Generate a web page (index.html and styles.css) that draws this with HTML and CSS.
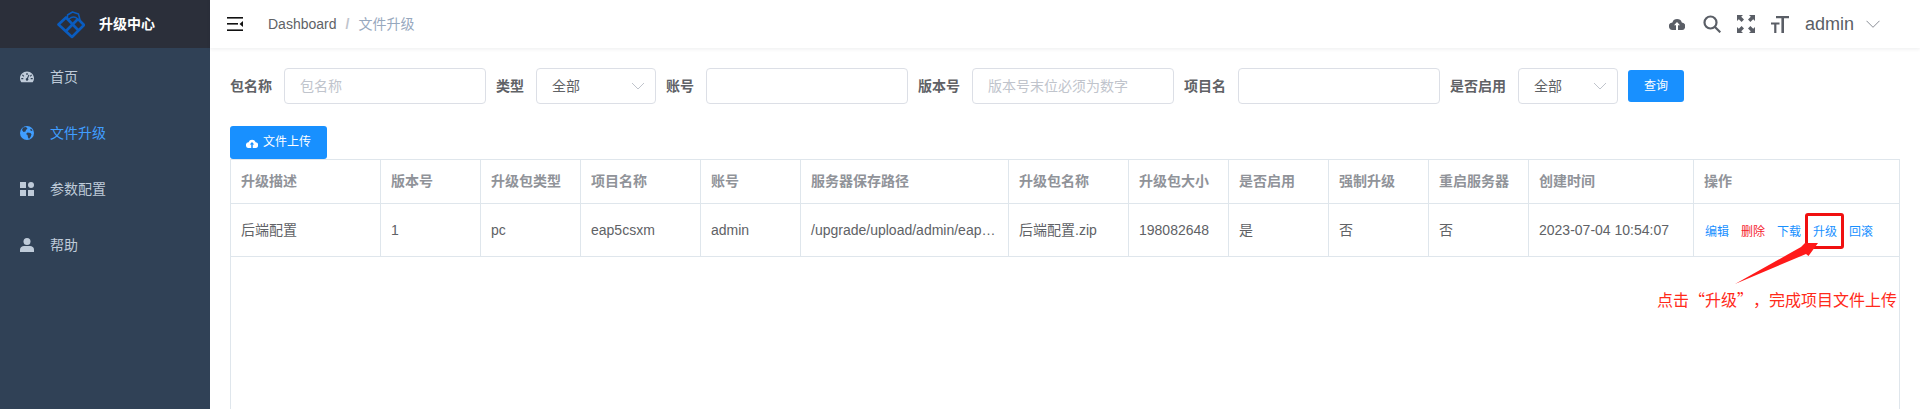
FILE: index.html
```html
<!DOCTYPE html>
<html lang="zh-CN">
<head>
<meta charset="utf-8">
<title>升级中心</title>
<link rel="stylesheet" href="styles.css">
</head>
<body>
<aside class="sidebar">
  <div class="brand">
    <svg class="logo" viewBox="0 0 28 28" fill="none" stroke="#0a5cbf" stroke-linejoin="round"><path stroke-width="2.600" d="M21 8 27 14 15 26 1.500 13.500 9 6.500 21 19"/><path stroke-width="2.600" d="M21 8 9 20"/><path stroke-width="1.500" d="M10.500 9V4L15.500 1 21.500 3 23 9"/><path stroke-width="1.300" d="M12 8Q16.500 4 21 8"/></svg>
    <span class="brand-name">升级中心</span>
  </div>
  <nav class="menu">
    <a class="menu-item">
      <svg class="menu-icon" viewBox="0 0 14 14" fill="currentColor"><path fill-rule="evenodd" d="M7 1.500C3.100 1.500 0 4.500 0 8.300c0 1.500.500 2.900 1.300 4h11.400c.8-1.100 1.300-2.500 1.300-4 0-3.800-3.100-6.800-7-6.800zM6.400 3h1.200v2H6.400zM2.800 4.500l1.400 1.400-.8.800L2 5.300zm8.400 0 .8.800-1.400 1.400-.8-.8zM1.300 8h2v1.200h-2zm9.400 0h2v1.200h-2zM8.500 4.700l.9.400L8 8.400a1.300 1.300 0 1 1-1-.4z"/></svg>
      <span>首页</span>
    </a>
    <a class="menu-item active">
      <svg class="menu-icon" viewBox="0 0 14 14"><circle cx="7" cy="7" r="7" fill="currentColor"/><path fill="#304156" d="M3 1.500 6 1l1.500 1.500L6 4 5.500 5.500 3.500 6 2 4zM7.500 6.500l3 .5 1 1.500-1 2.500-1.500 2-1-1.500-.5-2.500-1.500-1zM11 2.500l1.500 2-1 .5-1.500-1z"/></svg>
      <span>文件升级</span>
    </a>
    <a class="menu-item">
      <svg class="menu-icon" viewBox="0 0 14 14" fill="currentColor"><rect y="0" width="6" height="6"/><circle cx="11" cy="3" r="3"/><rect y="8" width="6" height="6"/><rect x="8" y="8" width="6" height="6"/></svg>
      <span>参数配置</span>
    </a>
    <a class="menu-item">
      <svg class="menu-icon" viewBox="0 0 14 14" fill="currentColor"><circle cx="7" cy="3.500" r="3.500"/><path d="M0 14v-2.500C0 9.500 2 8 4 8h6c2 0 4 1.500 4 3.500V14z"/></svg>
      <span>帮助</span>
    </a>
  </nav>
</aside>
<div class="main">
  <header class="navbar">
    <svg class="hamburger" viewBox="0 0 16 14" fill="#111"><rect width="16" height="1.600"/><rect y="6" width="11" height="1.600"/><rect y="12.400" width="16" height="1.600"/><path d="M16 4v6l-3.500-3z"/></svg>
    <div class="crumbs"><span class="crumb-root">Dashboard</span><span class="crumb-sep">/</span><span class="crumb-current">文件升级</span></div>
    <div class="nav-right">
      <svg class="nav-cloud" viewBox="0 0 16 12"><path fill="#5a5e66" d="M4 12a3.800 3.800 0 0 1-.6-7.600A5 5 0 0 1 12.800 4.400 3.800 3.800 0 0 1 12 12z"/><path fill="#fff" d="M8 4 5 7.300h2V12h2V7.300h2z"/></svg>
      <svg class="nav-icon" viewBox="0 0 18 18" fill="none" stroke="#5a5e66" stroke-width="2.200"><circle cx="7.500" cy="7.500" r="6"/><path d="m12 12 5.300 5.300"/></svg>
      <svg class="nav-icon" viewBox="0 0 18 18" fill="#5a5e66"><path d="M0 0h6L4.200 1.800 7 4.600 4.600 7 1.800 4.200 0 6zM18 0v6l-1.800-1.800L13.400 7 11 4.600l2.800-2.800L12 0zM0 18v-6l1.800 1.800L4.600 11 7 13.400l-2.800 2.800L6 18zM18 18h-6l1.800-1.800L11 13.400l2.400-2.400 2.800 2.800L18 12z"/></svg>
      <svg class="nav-icon" viewBox="0 0 18 18" fill="#5a5e66"><path d="M5 1h13v2.300h-5V18h-2.600V3.300H5zM0 7.500h8.500v2H5.400V18H3.200V9.500H0z"/></svg>
      <span class="user">admin</span>
      <svg class="nav-chevron" viewBox="0 0 14 8" fill="none" stroke="#8a8e96" stroke-width="1"><path d="m.5 .8 6.500 6.500L13.500 .8"/></svg>
    </div>
  </header>
  <section class="content">
    <form class="filters">
      <div class="field"><label class="field-label">包名称</label><div class="control w202"><span class="placeholder">包名称</span></div></div>
      <div class="field"><label class="field-label">类型</label><div class="control w120"><span>全部</span><svg class="select-arrow" viewBox="0 0 14 8" fill="none" stroke="#c0c4cc"><path d="m1 1 6 6 6-6"/></svg></div></div>
      <div class="field"><label class="field-label">账号</label><div class="control w202"></div></div>
      <div class="field"><label class="field-label">版本号</label><div class="control w202"><span class="placeholder">版本号末位必须为数字</span></div></div>
      <div class="field"><label class="field-label">项目名</label><div class="control w202"></div></div>
      <div class="field"><label class="field-label">是否启用</label><div class="control w100"><span>全部</span><svg class="select-arrow" viewBox="0 0 14 8" fill="none" stroke="#c0c4cc"><path d="m1 1 6 6 6-6"/></svg></div></div>
      <button type="button" class="btn-query">查询</button>
    </form>
    <button type="button" class="btn-upload">
      <svg class="upload-icon" viewBox="0 0 16 12"><path fill="#fff" d="M4 12a3.800 3.800 0 0 1-.6-7.600A5 5 0 0 1 12.800 4.400 3.800 3.800 0 0 1 12 12z"/><path fill="#1890ff" d="M8 4 5 7.300h2V12h2V7.300h2z"/></svg>
      文件上传
    </button>
    <div class="table-wrap">
      <table class="grid">
        <colgroup>
          <col class="c150"><col class="c100"><col class="c100"><col class="c120"><col class="c100"><col class="c208"><col class="c120"><col class="c100"><col class="c100"><col class="c100"><col class="c100"><col class="c165"><col class="c205">
        </colgroup>
        <thead>
          <tr><th>升级描述</th><th>版本号</th><th>升级包类型</th><th>项目名称</th><th>账号</th><th>服务器保存路径</th><th>升级包名称</th><th>升级包大小</th><th>是否启用</th><th>强制升级</th><th>重启服务器</th><th>创建时间</th><th>操作</th></tr>
        </thead>
        <tbody>
          <tr>
            <td>后端配置</td><td>1</td><td>pc</td><td>eap5csxm</td><td>admin</td><td>/upgrade/upload/admin/eap…</td><td>后端配置.zip</td><td>198082648</td><td>是</td><td>否</td><td>否</td><td>2023-07-04 10:54:07</td>
            <td class="ops"><a class="op">编辑</a><a class="op danger">删除</a><a class="op">下载</a><a class="op">升级</a><a class="op">回滚</a></td>
          </tr>
        </tbody>
      </table>
    </div>
  </section>
</div>
<div class="callout-box"></div>
<svg class="callout-arrow" viewBox="0 0 90 48"><path fill="#ff1a1a" d="M2 45 68 8 72 4 85 4 75.500 17 73 15z"/></svg>
<div class="callout-text">点击“升级”，完成项目文件上传</div>
</body>
</html>
```
FILE: styles.css
```css
* { box-sizing: border-box; }
html, body { margin: 0; height: 100%; }
body {
  display: flex;
  height: 409px;
  overflow: hidden;
  position: relative;
  background: #fff;
  color: #606266;
  font: 14px/1.15 "Liberation Sans", "Noto Sans CJK SC", sans-serif;
}

/* sidebar */
.sidebar { width: 210px; flex: none; background: #304156; }
.brand {
  height: 48px;
  background: #2b2f3a;
  display: flex;
  align-items: center;
  padding-left: 57px;
  gap: 14px;
}
.logo { width: 28px; height: 28px; margin-top: 1px; }
.brand-name { color: #fff; font-weight: 700; font-size: 14px; }
.menu { display: flex; flex-direction: column; margin-top: 1px; }
.menu-item {
  height: 56px;
  display: flex;
  align-items: center;
  padding-left: 20px;
  gap: 16px;
  color: #bfcbd9;
}
.menu-item.active { color: #409eff; }
.menu-icon { width: 14px; height: 14px; flex: none; }

/* main */
.main { flex: 1; min-width: 0; display: flex; flex-direction: column; }
.navbar {
  height: 48px;
  flex: none;
  display: flex;
  align-items: center;
  padding: 0 40px 0 17px;
  box-shadow: 0 1px 4px rgba(0, 21, 41, .08);
  position: relative;
}
.hamburger { width: 16px; height: 14px; flex: none; }
.crumbs { margin-left: 25px; display: flex; align-items: center; }
.crumb-sep { color: #c0c4cc; font-weight: 700; margin: 0 9px; }
.crumb-current { color: #97a8be; }
.nav-right { margin-left: auto; display: flex; align-items: center; }
.nav-cloud { width: 16px; height: 12px; margin-right: 18px; }
.nav-icon { width: 18px; height: 18px; margin-right: 16px; }
.user { font-size: 18px; color: #5a5e66; }
.nav-chevron { width: 14px; height: 8px; margin-left: 12px; }

/* content */
.content {
  flex: 1;
  min-height: 0;
  display: flex;
  flex-direction: column;
  align-items: flex-start;
  padding: 20px 20px 0;
}
.filters { display: flex; align-items: center; height: 36px; }
.field { display: flex; align-items: center; margin-right: 10px; }
.field-label { font-weight: 700; padding-right: 12px; color: #606266; }
.control {
  height: 36px;
  border: 1px solid #dcdfe6;
  border-radius: 4px;
  padding: 0 15px;
  display: flex;
  align-items: center;
  justify-content: space-between;
  color: #606266;
}
.w100 { width: 100px; }
.w120 { width: 120px; }
.w202 { width: 202px; }
.placeholder { color: #c0c4cc; }
.select-arrow { width: 14px; height: 8px; margin-right: -5px; }
.btn-query {
  width: 56px;
  height: 32px;
  border: 0;
  border-radius: 3px;
  background: #1890ff;
  color: #fff;
  font: inherit;
  font-size: 12px;
  padding: 1px 0 0;
}
.btn-upload {
  margin-top: 22px;
  width: 97px;
  height: 33px;
  border: 0;
  border-radius: 3px;
  background: #1890ff;
  color: #fff;
  font: inherit;
  font-size: 12px;
  padding: 1px 0 0;
  display: flex;
  align-items: center;
  justify-content: center;
  gap: 5px;
  flex: none;
}
.upload-icon { width: 12px; height: 9px; }

/* table */
.table-wrap {
  width: 1670px;
  flex: 1;
  min-height: 0;
  border: 1px solid #dfe6ec;
  border-bottom: 0;
}
.grid { border-collapse: separate; border-spacing: 0; table-layout: fixed; width: 1668px; }
.c100 { width: 100px; }
.c120 { width: 120px; }
.c150 { width: 150px; }
.c165 { width: 165px; }
.c205 { width: 205px; }
.c208 { width: 208px; }
.grid th, .grid td {
  border-right: 1px solid #dfe6ec;
  border-bottom: 1px solid #dfe6ec;
  padding: 0 10px;
  text-align: left;
  white-space: nowrap;
}
.grid th:last-child, .grid td:last-child { border-right: 0; }
.grid th { height: 44px; color: #909399; font-weight: 700; }
.grid td { height: 53px; color: #606266; padding-top: 1px; }
.grid td.ops { padding-left: 11px; padding-top: 2px; }
.op { color: #1890ff; font-size: 12px; margin-right: 12px; }
.op:last-child { margin-right: 0; }
.op.danger { color: #f5222d; }

/* screenshot annotation */
.callout-box {
  position: absolute;
  left: 1805px;
  top: 213px;
  width: 39px;
  height: 36px;
  border: 3px solid #f01010;
  border-radius: 3px;
}
.callout-arrow { position: absolute; left: 1733px; top: 239px; width: 90px; height: 48px; }
.callout-text {
  position: absolute;
  left: 1657px;
  top: 290px;
  color: #ff2a1a;
  font-size: 16px;
  white-space: nowrap;
  font-family: "Noto Sans CJK SC", sans-serif;
  text-spacing-trim: space-all;
}
```
